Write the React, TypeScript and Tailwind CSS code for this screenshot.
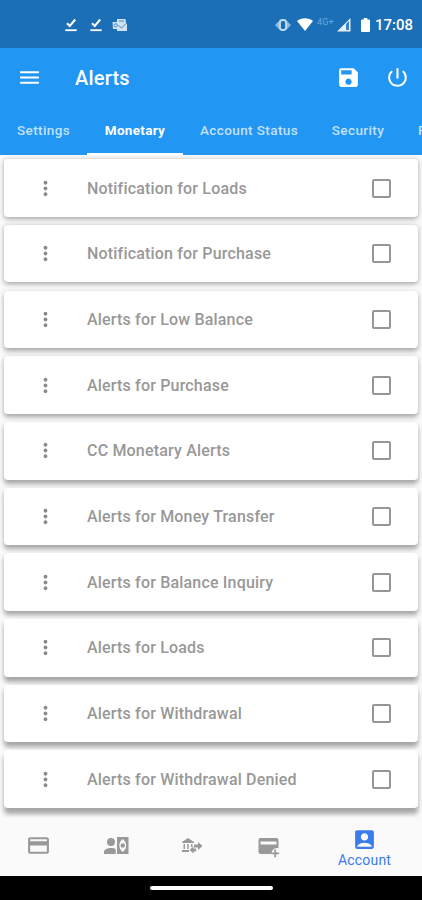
import React, { useState } from "react";
import { MdAccountBox, MdCreditCard, MdMenu, MdMoreVert, MdPowerSettingsNew, MdSave } from "react-icons/md";

const tabs = [
  { label: "Settings", className: "w-[87px] text-center" },
  { label: "Monetary", className: "w-24 text-center" },
  { label: "Account Status", className: "w-[132px] text-center" },
  { label: "Security", className: "w-[86px] text-center" },
  { label: "P", className: "w-[90px] pl-[17px] text-left" },
];

const alerts = [
  "Notification for Loads",
  "Notification for Purchase",
  "Alerts for Low Balance",
  "Alerts for Purchase",
  "CC Monetary Alerts",
  "Alerts for Money Transfer",
  "Alerts for Balance Inquiry",
  "Alerts for Loads",
  "Alerts for Withdrawal",
  "Alerts for Withdrawal Denied",
];

function DoneIcon() {
  return (
    <svg viewBox="0 0 12 14" className="h-3.5 w-3" fill="none" stroke="#fff">
      <path d="M2 5.2 4.8 8 10.2 1.5" strokeWidth="2" />
      <path d="M.3 12.2h11.4" strokeWidth="1.8" />
    </svg>
  );
}

function MailIcon() {
  return (
    <svg viewBox="0 0 16 14" className="h-3.5 w-4">
      <path d="M5 1h8.500l.5 4 1 1v7H5v-2H1L.5 4H5z" fill="#cfe2f4" />
      <path d="m6.500 7.500 3 2.500L14 5.500M7 3h5" fill="none" stroke="#4b8ac4" />
      <circle cx="3.700" cy="7.300" r="1.600" fill="none" stroke="#4b8ac4" />
    </svg>
  );
}

function StatusBar() {
  return (
    <div className="flex h-12 shrink-0 items-center bg-[#1b6fb6] pt-px pr-[9px] pl-[65px] text-white">
      <div className="flex items-center gap-[13px]">
        <DoneIcon />
        <DoneIcon />
        <div className="-ml-[3px]">
          <MailIcon />
        </div>
      </div>
      <div className="ml-auto flex items-center">
        <svg viewBox="0 0 16 14" className="mr-1.5 h-3.5 w-4">
          <path d="M5 2 0 7l5 5zM11 2l5 5-5 5z" fill="#8dbbe2" />
          <rect x="5" y="2" width="6" height="10" rx="2.500" fill="#1b6fb6" stroke="#c4dcf1" strokeWidth="1.800" />
        </svg>
        <svg viewBox="0 0 16 13" className="mr-1 h-[13px] w-4" fill="#fff">
          <path d="M8 13 0 3.100C4.400-.700 11.600-.700 16 3.100z" />
        </svg>
        <span className="mr-[3px] mb-1 text-[9px] leading-none tracking-[0.2px] text-[#6da6d8]">4G+</span>
        <svg viewBox="0 0 14 14" className="mr-[10px] h-3.5 w-3.5">
          <path d="M0 13.500 13.500 0v13.500z" fill="#e6f0f9" />
          <path d="M9 6 12 3v9H9z" fill="#3d83bf" />
        </svg>
        <svg viewBox="0 0 9 14" className="mr-[5px] h-3.5 w-[9px]" fill="#fff">
          <path d="M2.700 0h3.600v1.500H8q1 0 1 1V13q0 1-1 1H1q-1 0-1-1V2.500q0-1 1-1h1.700z" />
        </svg>
        <span className="pt-px text-[15px] leading-none font-medium">17:08</span>
      </div>
    </div>
  );
}

type AlertCardProps = {
  label: string;
  index: number;
  checked: boolean;
  onToggle: () => void;
};

function AlertCard({ label, index, checked, onToggle }: AlertCardProps) {
  const offset = 1.5 + index * 0.4;

  return (
    <div
      className="flex h-[57.500px] shrink-0 items-center rounded-[4px] bg-white pr-[27px] pl-[30px]"
      style={{ boxShadow: `0 ${offset}px 5px rgba(0, 0, 0, 0.34)` }}
    >
      <MdMoreVert className="size-[23px] text-[#8a8a8a]" />
      <span className="ml-[30px] pt-px text-[16px] font-medium tracking-[0.18px] text-[#989898]">{label}</span>
      <button
        onClick={onToggle}
        aria-label={label}
        className={`ml-auto size-[19px] rounded-[2px] border-2 border-[#969696] ${checked ? "bg-[#2196f3]" : "bg-white"}`}
      />
    </div>
  );
}

function BottomNav() {
  return (
    <nav className="flex h-[58px] shrink-0 items-center bg-[#fafafa] pb-[3px] text-[#999]">
      <div className="flex w-[77px] justify-center">
        <MdCreditCard className="size-[25px]" />
      </div>
      <div className="flex w-[77px] justify-center">
        <svg viewBox="0 0 26 18" className="h-[18px] w-[26px]" fill="currentColor">
          <circle cx="8" cy="5" r="4" />
          <path d="M1 17v-2c0-3 4-4 7-4 2 0 3.500.3 4.700 1v5z" />
          <path
            fillRule="evenodd"
            d="M14 0h11.500v17H14zM19.750 2c-2 1.600-3.400 3.800-3.400 6.500s1.400 4.900 3.400 6.500c2-1.600 3.400-3.800 3.400-6.500s-1.400-4.900-3.400-6.500z"
          />
          <circle cx="19.750" cy="8.500" r="2.200" />
        </svg>
      </div>
      <div className="flex w-[77px] justify-center pr-0.5">
        <svg viewBox="0 0 22 17" className="h-[17px] w-[22px]" fill="currentColor">
          <path d="M1 5 7 1l6 4v1H1zM2.500 7H4v5H2.500zM6.200 7h1.500v5H6.200zM10 7h1.500v3H10zM1 13h7v2H1z" />
          <path d="M13 7.500h4V5l4.500 4L17 13v-2.500h-4zM15 11.500h-2.500V9.500L8.500 13l4 3.500v-2H15z" />
        </svg>
      </div>
      <div className="flex w-[77px] justify-center">
        <svg viewBox="0 0 23 21" className="mt-[3px] h-[21px] w-[23px]" fill="currentColor">
          <path fillRule="evenodd" d="M2.500 1h16q2 0 2 2v8h-2q-5 1-5 6h-11q-2 0-2-2V3q0-2 2-2zM2.500 4.500v3h16v-3z" />
          <path d="M16.300 12.500h1.800v3h3v1.800h-3v3h-1.800v-3h-3v-1.800h3z" />
        </svg>
      </div>
      <div className="flex flex-1 flex-col items-center pt-[3px] pr-px text-[#3b7ced]">
        <MdAccountBox className="size-[25px]" />
        <span className="text-[14px] leading-4 tracking-[0.2px]">Account</span>
      </div>
    </nav>
  );
}

export default function App() {
  const [activeTab, setActiveTab] = useState("Monetary");
  const [selected, setSelected] = useState<string[]>([]);

  const toggle = (label: string) => {
    setSelected(selected.includes(label) ? selected.filter((item) => item !== label) : [...selected, label]);
  };

  return (
    <div className="flex h-[900px] w-[422px] flex-col overflow-hidden bg-[#fafafa] font-[Roboto,sans-serif]">
      <StatusBar />

      <header className="flex h-[107px] shrink-0 flex-col bg-[#2196f3] text-white">
        <div className="flex h-[59px] shrink-0 items-center pr-3 pl-[17px]">
          <MdMenu className="size-[25px]" />
          <h1 className="ml-[33px] text-[20px] font-medium tracking-[0.2px]">Alerts</h1>
          <MdSave className="mr-6 ml-auto size-[25px]" />
          <MdPowerSettingsNew className="size-[25px]" />
        </div>
        <div className="flex h-12 shrink-0 overflow-hidden">
          {tabs.map((tab) => (
            <button
              key={tab.label}
              onClick={() => setActiveTab(tab.label)}
              className={`${tab.className} shrink-0 border-b-2 text-[13.5px] ${
                activeTab === tab.label
                  ? "border-white font-bold tracking-[0.3px] text-white"
                  : "border-transparent font-medium tracking-[0.4px] text-[#c2e1fb]"
              }`}
            >
              {tab.label}
            </button>
          ))}
        </div>
      </header>

      {/* Alert list */}
      <main className="flex h-[663px] shrink-0 flex-col gap-[8.200px] overflow-hidden px-1 pt-[4.300px]">
        {alerts.map((label, index) => (
          <AlertCard
            key={label}
            label={label}
            index={index}
            checked={selected.includes(label)}
            onToggle={() => toggle(label)}
          />
        ))}
      </main>

      <BottomNav />

      {/* System gesture bar */}
      <div className="flex h-6 shrink-0 items-center justify-center bg-black">
        <div className="h-1 w-[123px] rounded-full bg-white" />
      </div>
    </div>
  );
}
